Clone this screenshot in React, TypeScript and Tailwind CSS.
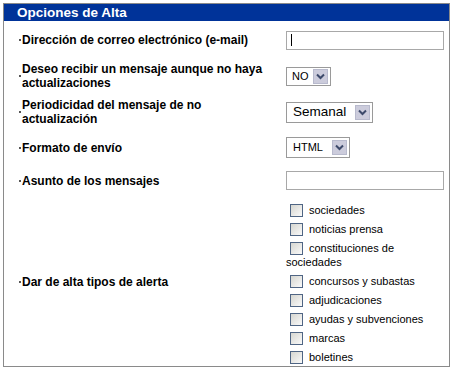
import React from "react";

const Bullet = () => (
  <div className="w-[18px] shrink-0 flex items-center">
    <div className="ml-[15px] w-[2px] h-[2px] bg-[#555]" />
  </div>
);

const Chevron = () => (
  <svg width="9" height="7" viewBox="0 0 9 7">
    <path d="M1 1.5 L4.5 5 L8 1.5" fill="none" stroke="#3d4a6b" strokeWidth="2" />
  </svg>
);

const Select = ({ label, w, h, text, pl }: { label: string; w: string; h: string; text: string; pl: string }) => (
  <div className={`${w} ${h} ${pl} border border-[#9a9a9a] bg-white flex items-center justify-between pr-[2px]`}>
    <span className={`${text} text-black leading-none`}>{label}</span>
    <div className="w-[15px] h-[15px] shrink-0 bg-[#ccccdc] border border-[#b8bacd] flex items-center justify-center">
      <Chevron />
    </div>
  </div>
);

const Check = () => (
  <div className="w-[13px] h-[13px] shrink-0 border border-[#4f6584] bg-gradient-to-br from-[#d6d6d0] to-[#fafafa]" />
);

const Item = ({ label }: { label: string }) => (
  <div className="h-[19px] flex items-center">
    <div className="ml-[4px] mr-[6px]">
      <Check />
    </div>
    <span className="text-[11px] text-black leading-none">{label}</span>
  </div>
);

const Label = ({ children }: { children: React.ReactNode }) => (
  <div className="w-[264px] shrink-0 text-[12px] font-bold leading-[14px] text-black">{children}</div>
);

export default function App() {
  return (
    <div className="w-[454px] h-[368px] bg-white font-['Liberation_Sans',Arial,sans-serif]">
      <div className="ml-[3px] pt-[3px] w-[447px]">
        <div className="h-[364px] border-t border-l border-r border-b border-[#8a8a8a] flex flex-col overflow-hidden">
          <div className="h-[17px] shrink-0 bg-[#003399] flex items-center pl-[13px]">
            <span className="text-white font-bold text-[13.5px] leading-none">Opciones de Alta</span>
          </div>

          <div className="h-[38px] shrink-0 flex items-center">
            <Bullet />
            <Label>Dirección de correo electrónico (e-mail)</Label>
            <div className="w-[158px] h-[19px] border border-[#a8a8a8] bg-white flex items-center pl-[4px]">
              <div className="w-[1px] h-[12px] bg-black" />
            </div>
          </div>

          <div className="h-[34px] shrink-0 flex items-center">
            <Bullet />
            <Label>
              Deseo recibir un mensaje aunque no haya
              <br />
              actualizaciones
            </Label>
            <Select label="NO" w="w-[45px]" h="h-[19px]" text="text-[11px]" pl="pl-[5px]" />
          </div>

          <div className="h-[38px] shrink-0 flex items-center">
            <Bullet />
            <Label>
              Periodicidad del mensaje de no
              <br />
              actualización
            </Label>
            <Select label="Semanal" w="w-[87px]" h="h-[21px]" text="text-[13.5px]" pl="pl-[6px]" />
          </div>

          <div className="h-[33px] shrink-0 flex items-center">
            <Bullet />
            <Label>Formato de envío</Label>
            <Select label="HTML" w="w-[64px]" h="h-[21px]" text="text-[11px]" pl="pl-[6px]" />
          </div>

          <div className="h-[33px] shrink-0 flex items-center">
            <Bullet />
            <Label>Asunto de los mensajes</Label>
            <div className="w-[158px] h-[19px] border border-[#a8a8a8] bg-white" />
          </div>

          <div className="flex-1 flex">
            <div className="flex items-center">
              <Bullet />
              <Label>Dar de alta tipos de alerta</Label>
            </div>
            <div className="w-[158px] pt-[4px] flex flex-col">
              <Item label="sociedades" />
              <Item label="noticias prensa" />
              <Item label="constituciones de" />
              <div className="h-[14px] -mt-[3px] mb-[3px] text-[11px] leading-[14px] text-black">sociedades</div>
              <Item label="concursos y subastas" />
              <Item label="adjudicaciones" />
              <Item label="ayudas y subvenciones" />
              <Item label="marcas" />
              <Item label="boletines" />
            </div>
          </div>
        </div>
      </div>
    </div>
  );
}
